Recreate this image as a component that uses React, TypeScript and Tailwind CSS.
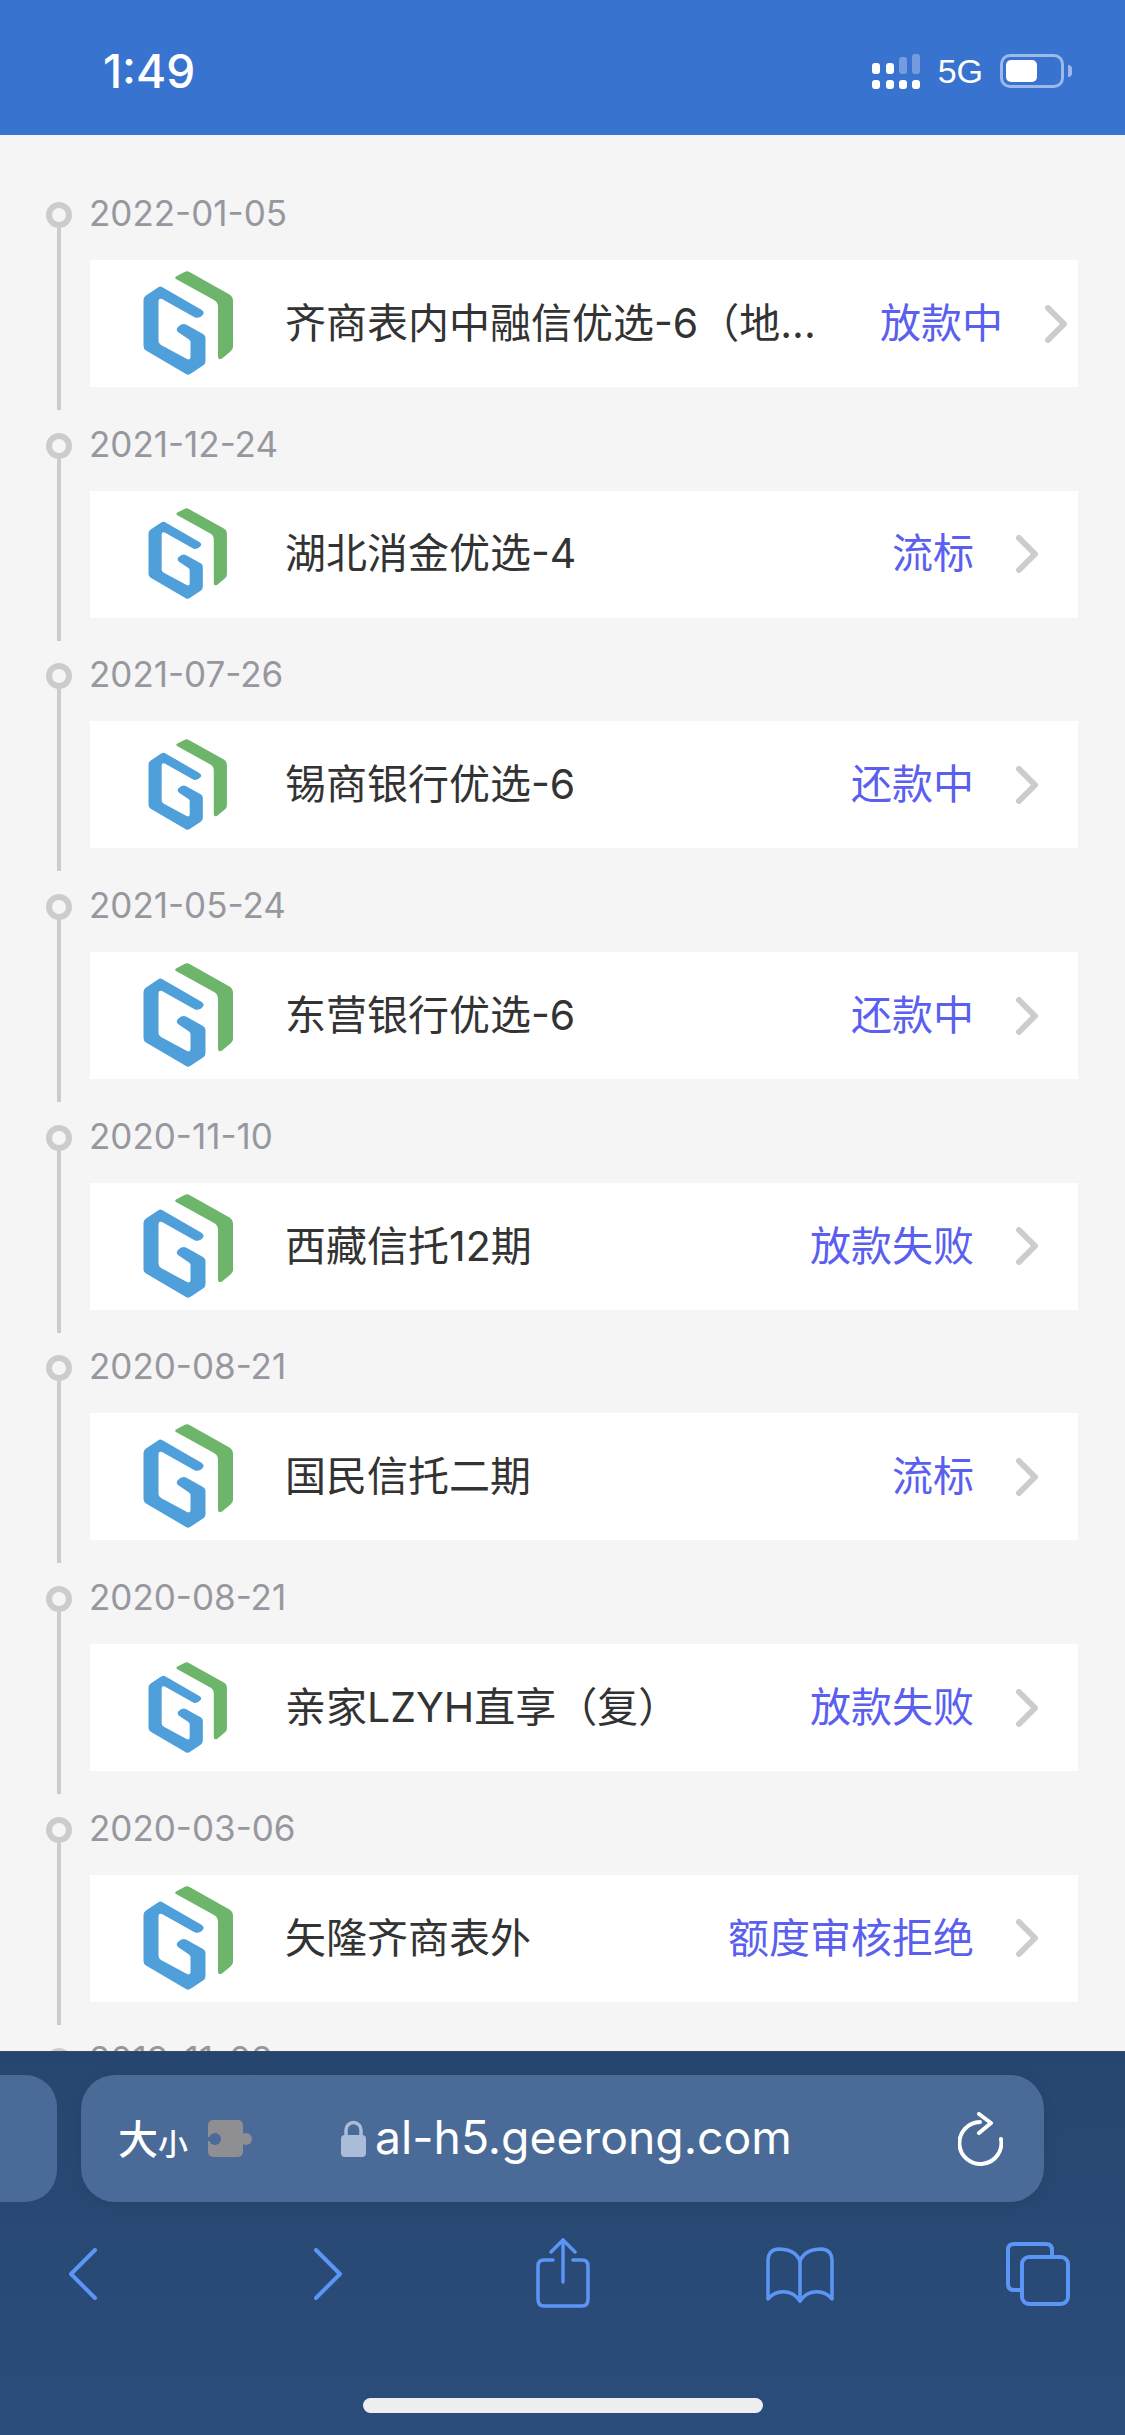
const FONT = "font-['Inter','Noto_Sans_CJK_SC',sans-serif]"

const items = [
  { date: "2022-01-05", name: "齐商表内中融信优选-6（地...", status: "放款中", big: true, first: true },
  { date: "2021-12-24", name: "湖北消金优选-4", status: "流标", big: false },
  { date: "2021-07-26", name: "锡商银行优选-6", status: "还款中", big: false },
  { date: "2021-05-24", name: "东营银行优选-6", status: "还款中", big: true },
  { date: "2020-11-10", name: "西藏信托12期", status: "放款失败", big: true },
  { date: "2020-08-21", name: "国民信托二期", status: "流标", big: true },
  { date: "2020-08-21", name: "亲家LZYH直享（复）", status: "放款失败", big: false },
  { date: "2020-03-06", name: "矢隆齐商表外", status: "额度审核拒绝", big: true },
]

function Logo({ big }: { big: boolean }) {
  return (
    <svg viewBox="0 0 90 105" className={big ? "w-[90px] h-[105px]" : "w-[79px] h-[92px]"}>
      <path
        d="M19 16 L58 38.5 Q62 41 60 43.5 Q57 47.5 52 46.5 L19 28 Q15.5 26.5 15.5 31 L15.5 70 Q15.5 72.5 18 74 L44 88 Q47.5 89.5 47.5 86 L47.5 71 Q47.5 69.5 46 68.5 L35 61 Q32.5 58.5 35 56 Q38.5 52 43 53.5 L60 63 Q62.5 64.5 62.5 67 L62.5 90 Q62.5 93 60 94.5 L48 102.5 Q45.5 104.5 43 103 L3 79.5 Q0.5 78 0.5 75 L0.5 29 Q0.5 26 3 24.5 L15 16.5 Q17 15 19 16 Z"
        fill="#4f9fdb"
      />
      <path
        d="M33 5.5 L41.5 1 Q44 -0.5 46.5 1 L86.5 23.5 Q90 25.5 90 30 L90 76 Q90 78.5 87.5 80.5 L79 87.5 Q75 89.5 75 85.5 L75 36 Q75 31 71 29 L33 8 Q31.5 6.5 33 5.5 Z"
        fill="#6cb56a"
      />
    </svg>
  )
}

function Chevron({ className }: { className: string }) {
  return (
    <svg viewBox="0 0 22 38" className={`w-[22px] h-[38px] ${className}`} fill="none" stroke="#cccccc" strokeWidth="6" strokeLinecap="round" strokeLinejoin="round">
      <path d="M3 3 L19 19 L3 35" />
    </svg>
  )
}

function TimelineItem({ item }: { item: (typeof items)[number] }) {
  return (
    <div className="relative h-[230.7px] pl-[90px]">
      <div className="absolute left-[46px] top-[10px] w-[26px] h-[26px] rounded-full border-[6px] border-[#cccccc]" />
      <div className="absolute left-[57px] top-[36px] w-[4px] h-[182px] bg-[#cccccc]" />
      <div className="h-[68px] -ml-[1px] text-[35px] leading-[42px] text-[#97989f]">{item.date}</div>
      <div className="flex items-center w-[988px] h-[127px] bg-white">
        <div className="flex items-center justify-center w-[195px] shrink-0">
          <Logo big={item.big} />
        </div>
        <div className="flex-1 min-w-0 whitespace-nowrap text-[41px] text-[#333333]">{item.name}</div>
        <div className={`whitespace-nowrap text-[41px] text-[#5a5ff0] ${item.first ? "mr-[42px]" : "mr-[42px]"}`}>{item.status}</div>
        <Chevron className={item.first ? "mr-[11px]" : "mr-[40px]"} />
      </div>
    </div>
  )
}

function StatusBar() {
  return (
    <div className="relative flex items-center justify-between h-[135px] shrink-0 pt-[7px] bg-[#3873cf] text-white">
      <div className="pl-[103px] text-[46px] font-medium leading-none font-['Inter',sans-serif]">1:49</div>
      <div className="flex items-center pr-[61px]">
        <svg viewBox="0 0 49 35" className="w-[49px] h-[35px]">
          <g fill="#ffffff">
            <rect x="0" y="9" width="8" height="11" rx="3" />
            <rect x="14" y="9" width="8" height="11" rx="3" />
            <rect x="0" y="26" width="8" height="9" rx="3" />
            <rect x="14" y="26" width="8" height="9" rx="3" />
            <rect x="27" y="26" width="8" height="9" rx="3" />
            <rect x="40" y="26" width="8" height="9" rx="3" />
          </g>
          <g fill="#ffffff" opacity="0.3">
            <rect x="27" y="3" width="8" height="17" rx="3" />
            <rect x="40" y="0" width="8" height="20" rx="3" />
          </g>
        </svg>
        <div className="ml-[17px] text-[34px] leading-none font-['Liberation_Sans',sans-serif]">5G</div>
        <div className="relative ml-[17px] w-[64px] h-[34px] rounded-[10px] border-[3px] border-[#ffffff80] p-[3px]">
          <div className="w-[31px] h-full rounded-[5px] bg-white" />
          <div className="absolute -right-[11px] top-[8px] w-[4px] h-[12px] rounded-r-full bg-[#ffffff80]" />
        </div>
      </div>
    </div>
  )
}

function UrlBar() {
  return (
    <div className="flex gap-[24px] mt-[23px] h-[127px]">
      <div className="w-[57px] shrink-0 rounded-r-[32px] bg-[#4a6b97]" />
      <div className="relative flex items-center w-[963px] rounded-[34px] bg-[#4a6b97] text-white shadow-[0_4px_16px_rgba(0,0,0,0.08)]">
        <div className="flex items-end pl-[37px] pb-[4px] font-['Noto_Sans_CJK_SC',sans-serif] font-medium leading-none">
          <span className="text-[40px]">大</span>
          <span className="text-[30px]">小</span>
        </div>
        <svg viewBox="0 0 44 37" className="ml-[20px] w-[44px] h-[37px]" fill="#8e8e93">
          <rect x="0" y="0" width="35" height="37" rx="5" />
          <circle cx="38" cy="19" r="6" />
          <rect x="33" y="16" width="4" height="6" />
          <circle cx="7" cy="19" r="6" fill="#4a6b97" />
          <rect x="0" y="17" width="6" height="4" fill="#4a6b97" />
        </svg>
        <svg viewBox="0 0 25 37" className="ml-[89px] w-[25px] h-[37px]">
          <path d="M5 17 V10 A7.5 7.5 0 0 1 20 10 V17" fill="none" stroke="#a9bcd8" strokeWidth="3.5" />
          <rect x="0" y="15" width="25" height="22" rx="4" fill="#a9bcd8" />
        </svg>
        <div className="ml-[9px] text-[46.3px] leading-none pb-[2px] whitespace-nowrap font-['Inter',sans-serif]">al-h5.geerong.com</div>
        <svg viewBox="0 0 45 54" className="absolute left-[877px] top-[37px] w-[45px] h-[54px]" fill="none" stroke="#ffffff" strokeWidth="4" strokeLinecap="round" strokeLinejoin="round">
          <path d="M22 10 A21 21 0 1 0 43 27" />
          <path d="M21 2 L33 11 L21 21" />
        </svg>
      </div>
    </div>
  )
}

function Toolbar() {
  return (
    <div className="relative flex justify-between h-[70px] mt-[36px]">
      <svg viewBox="0 0 28 52" className="absolute left-[69px] top-[10px] w-[28px] h-[52px]" fill="none" stroke="#5b95f5" strokeWidth="4" strokeLinecap="round" strokeLinejoin="round">
        <path d="M26 2 L2 26 L26 50" />
      </svg>
      <svg viewBox="0 0 28 52" className="absolute left-[314px] top-[10px] w-[28px] h-[52px]" fill="none" stroke="#5b95f5" strokeWidth="4" strokeLinecap="round" strokeLinejoin="round">
        <path d="M2 2 L26 26 L2 50" />
      </svg>
      <svg viewBox="0 0 54 70" className="absolute left-[536px] top-0 w-[54px] h-[70px]" fill="none" stroke="#5b95f5" strokeWidth="3.5" strokeLinecap="round" strokeLinejoin="round">
        <path d="M17 22 H8 Q2 22 2 28 V61 Q2 68 8 68 H46 Q52 68 52 61 V28 Q52 22 46 22 H37" />
        <path d="M27 44 V2" />
        <path d="M15 14 L27 2 L39 14" />
      </svg>
      <svg viewBox="0 0 68 56" className="absolute left-[766px] top-[9px] w-[68px] h-[56px]" fill="none" stroke="#5b95f5" strokeWidth="3.5" strokeLinecap="round" strokeLinejoin="round">
        <path d="M34 14 C30 4 20 2 12 2 Q2 3 2 14 V52 C10 42 26 42 34 54 C42 42 58 42 66 52 V14 Q66 3 56 2 C48 2 38 4 34 14 Z" />
        <path d="M34 14 V54" />
      </svg>
      <svg viewBox="0 0 64 64" className="absolute left-[1006px] top-[4px] w-[64px] h-[64px]" fill="none" stroke="#5b95f5" strokeWidth="4" strokeLinecap="round" strokeLinejoin="round">
        <path d="M46 14 V8 Q46 2 40 2 H8 Q2 2 2 8 V42 Q2 48 8 48 H15" />
        <rect x="16" y="15" width="46" height="47" rx="7" />
      </svg>
    </div>
  )
}

export default function App() {
  return (
    <div className={`flex flex-col w-[1125px] h-[2435px] overflow-hidden bg-[#f5f5f5] ${FONT}`}>
      <StatusBar />
      <div className="flex-1 min-h-0 overflow-hidden pt-[57px]">
        {items.map((item, index) => (
          <TimelineItem key={index} item={item} />
        ))}
        <div className="relative pl-[90px]">
          <div className="absolute left-[46px] top-[10px] w-[26px] h-[26px] rounded-full border-[6px] border-[#cccccc]" />
          <div className="h-[68px] -ml-[1px] text-[35px] leading-[42px] text-[#97989f]">2019-11-08</div>
        </div>
      </div>
      <div className="relative h-[384px] shrink-0 bg-gradient-to-b from-[#27466f] to-[#2b4d7b] border-t border-[#3c4a5e]">
        <UrlBar />
        <Toolbar />
        <div className="absolute left-[363px] top-[346px] w-[400px] h-[15px] rounded-full bg-[#eeeeee]" />
      </div>
    </div>
  )
}
